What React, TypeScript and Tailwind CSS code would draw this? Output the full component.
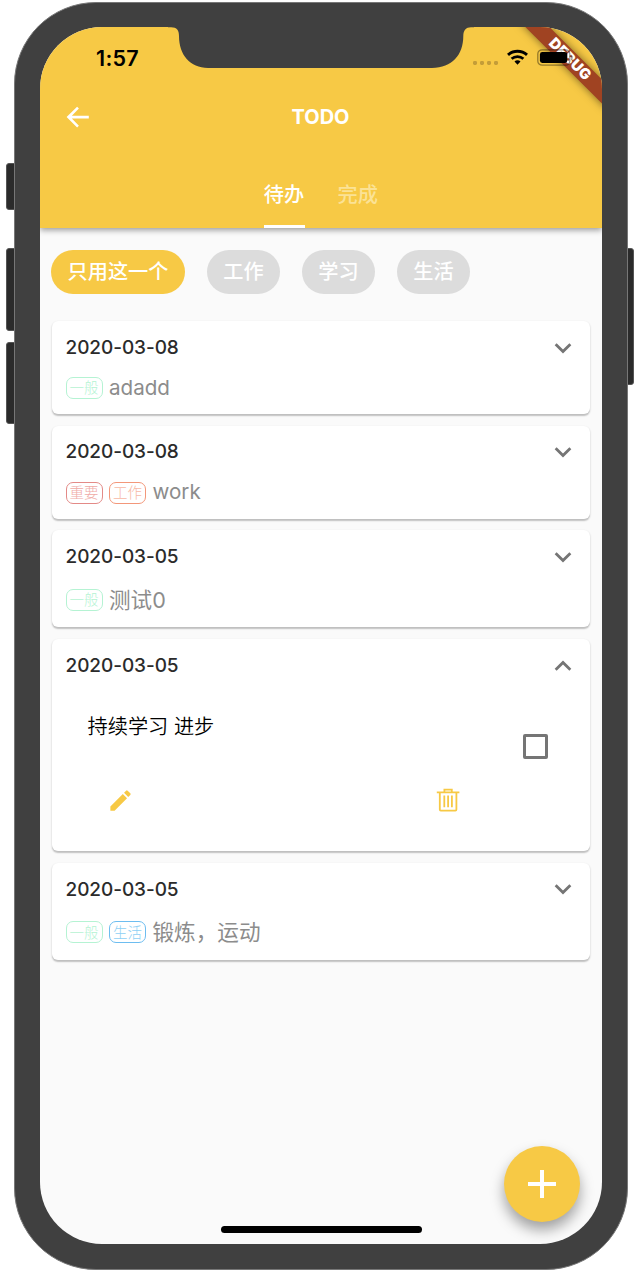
import type { ReactNode } from "react";

type Tag = { label: string; tone: "green" | "red" | "orange" | "blue" };
type Todo = { date: string; tags: Tag[]; text: string; tall?: boolean };

const tones: Record<Tag["tone"], string> = {
  green: "border-[#b5f3d3] text-[#b5f3d3]",
  red: "border-[#e38a87] text-[#efaaa6]",
  orange: "border-[#f3977a] text-[#f7b9a6]",
  blue: "border-[#6dbdf0] text-[#8fd0f5]",
};

const before: Todo[] = [
  { date: "2020-03-08", tags: [{ label: "一般", tone: "green" }], text: "adadd" },
  {
    date: "2020-03-08",
    tags: [{ label: "重要", tone: "red" }, { label: "工作", tone: "orange" }],
    text: "work",
  },
  { date: "2020-03-05", tags: [{ label: "一般", tone: "green" }], text: "测试0", tall: true },
];

const after: Todo[] = [
  {
    date: "2020-03-05",
    tags: [{ label: "一般", tone: "green" }, { label: "生活", tone: "blue" }],
    text: "锻炼，运动",
    tall: true,
  },
];

const Chevron = ({ up = false }: { up?: boolean }) => (
  <svg width="36" height="36" viewBox="0 0 24 24" className={up ? "rotate-180" : ""}>
    <path d="M16.59 8.59 12 13.17 7.41 8.59 6 10l6 6 6-6z" transform="translate(.9 .9) scale(.925)" fill="#757575" />
  </svg>
);

function Card({ date, height, up, children }: { date: string; height: string; up?: boolean; children: ReactNode }) {
  return (
    <section
      className={`${height} rounded-[6px] bg-white pr-[9.5px] pl-[13.5px] shadow-[0_1.5px_1.5px_rgba(0,0,0,0.2),0_1px_3px_rgba(0,0,0,0.08)]`}
    >
      <div className="flex h-[53px] items-center justify-between">
        <span className="pt-[1px] text-[19px] font-medium tracking-[-0.07px] text-[#2b2b2b]">{date}</span>
        <Chevron up={up} />
      </div>
      {children}
    </section>
  );
}

function TodoCard({ date, tags, text, tall }: Todo) {
  return (
    <Card date={date} height={tall ? "h-[97px]" : "h-[93px]"}>
      <div className={`flex items-center ${tall ? "h-[33px]" : "h-[28px]"}`}>
        {tags.map((t) => (
          <span
            key={t.label}
            className={`mr-[6.5px] flex h-[22px] w-[37px] items-center justify-center rounded-[7px] border pt-[1px] text-[14.5px] leading-none font-light ${tones[t.tone]}`}
          >
            {t.label}
          </span>
        ))}
        <span className={`leading-none text-[#8c8c8c] ${tall ? "pt-[1px] text-[21.6px]" : "text-[20.6px]"}`}>
          {text}
        </span>
      </div>
    </Card>
  );
}

function StatusBar() {
  return (
    <div className="flex h-[61px] justify-between">
      <span className="pt-[18px] pl-[56px] text-[21.5px] leading-[26px] font-semibold tracking-[0.3px] text-black">
        1:57
      </span>
      <div className="flex pr-[73px]">
        <div className="flex gap-[2.8px] pt-[34px] pr-[9px]">
          {[0, 1, 2, 3].map((i) => (
            <span key={i} className="size-[4.2px] rounded-[1.4px] bg-[#c49d38]" />
          ))}
        </div>
        <svg width="22" height="17" viewBox="0 0 22 17" className="mt-[22px]">
          <g fill="none" stroke="#000">
            <path d="M1 5.9a14.2 14.2 0 0 1 19 0" strokeWidth="2.9" />
            <path d="M4.6 9.8a8.8 8.8 0 0 1 11.8 0" strokeWidth="2.7" />
          </g>
          <path d="m7.5 12.6 3 3.1 3-3.1a4.2 4.2 0 0 0-6 0Z" fill="#000" />
        </svg>
      </div>
    </div>
  );
}

export default function App() {
  const chips = ["工作", "学习", "生活"];
  return (
    <div className="relative h-[1272px] w-[642px] overflow-hidden bg-white font-['Inter','Noto_Sans_CJK_SC',sans-serif]">
      <span className="absolute top-[163px] left-[6px] h-[47px] w-[12px] rounded-[3px] border-[1.5px] border-[#555] bg-[#2b2b2b]" />
      <span className="absolute top-[248px] left-[6px] h-[83px] w-[12px] rounded-[3px] border-[1.5px] border-[#555] bg-[#2b2b2b]" />
      <span className="absolute top-[342px] left-[6px] h-[82px] w-[12px] rounded-[3px] border-[1.5px] border-[#555] bg-[#2b2b2b]" />
      <span className="absolute top-[248px] left-[622px] h-[137px] w-[12px] rounded-[3px] border-[1.5px] border-[#555] bg-[#2b2b2b]" />

      <div className="relative mt-[2px] ml-[14px] h-[1268px] w-[614px] rounded-[82px] border border-[#777] bg-[#404040] pt-[24px] pl-[25px]">
        <div className="relative isolate flex h-[1217px] w-[562px] flex-col overflow-hidden rounded-[62px] bg-[#fafafa]">
          <header className="relative z-10 h-[201px] bg-[#f7c945] shadow-[0_2px_6px_rgba(0,0,0,0.4)]">
            <StatusBar />
            <div className="flex h-[57px] items-center px-[20px]">
              <svg width="36" height="36" viewBox="0 0 24 24">
                <path d="M19.2 11.1H7.9l4.7-4.8-1.2-1.2L4.4 12l7 7 1.2-1.2-4.7-4.8h11.3z" fill="#fff" />
              </svg>
              <h1 className="grow pr-[37px] text-center text-[20px] font-bold text-white">TODO</h1>
            </div>
            <nav className="flex h-[83px] justify-center gap-[33px] text-[20.2px] font-medium">
              <span className="flex w-[41px] justify-center border-b-[3px] border-white pt-[35px] leading-[30px] whitespace-nowrap text-white">
                待办
              </span>
              <span className="w-[41px] pt-[35px] leading-[30px] whitespace-nowrap text-[#fbe295]">完成</span>
            </nav>
          </header>

          <div className="absolute top-[24px] left-[470px] z-[11] flex h-[16.6px] w-[120px] rotate-45 items-center justify-center bg-[#a04322] text-[14.8px] leading-none font-black tracking-[0.3px] text-white shadow-[0_0_9px_rgba(0,0,0,0.5)]">
            DEBUG
          </div>
          <svg width="40" height="17" viewBox="0 0 40 17" className="absolute top-[22px] left-[496px] z-[12]">
            <rect x="1.8" y=".8" width="32" height="15.4" rx="4.3" fill="none" stroke="#000" strokeOpacity=".4" strokeWidth="1.3" />
            <rect x="3.9" y="3" width="27.4" height="11" rx="2.4" />
            <path d="M35.2 5.8c2 .5 2 4.9 0 5.4Z" fillOpacity=".4" />
          </svg>

          <div className="flex gap-[22px] px-[11px] pt-[22px] text-[20.2px] leading-none font-medium text-white">
            <span className="flex h-[43.5px] w-[134px] items-center justify-center rounded-full bg-[#f7c945] pt-[1px]">
              只用这一个
            </span>
            {chips.map((c) => (
              <span key={c} className="flex h-[43.5px] w-[73px] items-center justify-center rounded-full bg-[#dcdcdc] pt-[1px]">
                {c}
              </span>
            ))}
          </div>

          <main className="flex flex-col gap-[11.7px] px-[12px] pt-[27.5px]">
            {before.map((t, i) => (
              <TodoCard key={i} {...t} />
            ))}
            <Card date="2020-03-05" height="h-[212px]" up>
              <div className="flex h-[159px] items-start">
                <div className="flex grow flex-col pl-[22px]">
                  <p className="pt-[20px] text-[20.2px] leading-[30px] font-[350] text-black">持续学习 进步</p>
                  <div className="flex w-[372.5px] justify-between pt-[45px] pl-[19px]">
                    <svg width="27" height="27" viewBox="0 0 24 24">
                      <path
                        d="M3 17.25V21h3.75L17.81 9.94l-3.75-3.75zM20.71 7.04a1 1 0 0 0 0-1.41l-2.34-2.34a1 1 0 0 0-1.41 0l-1.83 1.83 3.75 3.75z"
                        fill="#f7c945"
                      />
                    </svg>
                    <svg width="24" height="24" viewBox="0 0 24 24" fill="none" stroke="#f7c945" strokeWidth="1.8" className="mt-[1px]">
                      <path d="M.8 4.3h22.6M8.4 4V1.6h7.4V4M3.8 4.3v17.3c0 .7.4 1 1 1h14.6c.6 0 1-.3 1-1V4.3M8.3 7.6v11.6M12.1 7.6v11.6M15.9 7.6v11.6" />
                    </svg>
                  </div>
                </div>
                <span className="mt-[42px] mr-[32.5px] size-[25px] rounded-[2px] border-[3px] border-[#757575]" />
              </div>
            </Card>
            {after.map((t, i) => (
              <TodoCard key={i} {...t} />
            ))}
          </main>

          <button className="absolute top-[1119px] left-[464px] flex size-[76px] items-center justify-center rounded-full bg-[#f7c945] shadow-[0_8px_14px_rgba(0,0,0,0.36)]">
            <svg width="28" height="28" viewBox="0 0 28 28" stroke="#fff" strokeWidth="4">
              <path d="M14 0v28M0 14h28" />
            </svg>
          </button>
          <span className="absolute top-[1199px] left-[180.5px] h-[7px] w-[201px] rounded-full bg-black" />
        </div>

        <svg width="306" height="42" viewBox="0 0 306 42" className="absolute top-[24px] left-[153px]">
          <path
            d="M0 0H306V.2H303C298 .2 295.3 3 295.3 9C295.3 28 284 40.9 264 40.9H40C22 40.9 11 28 11 9C11 3 9 .2 3 .2H0Z"
            fill="#404040"
          />
        </svg>
      </div>
    </div>
  );
}
